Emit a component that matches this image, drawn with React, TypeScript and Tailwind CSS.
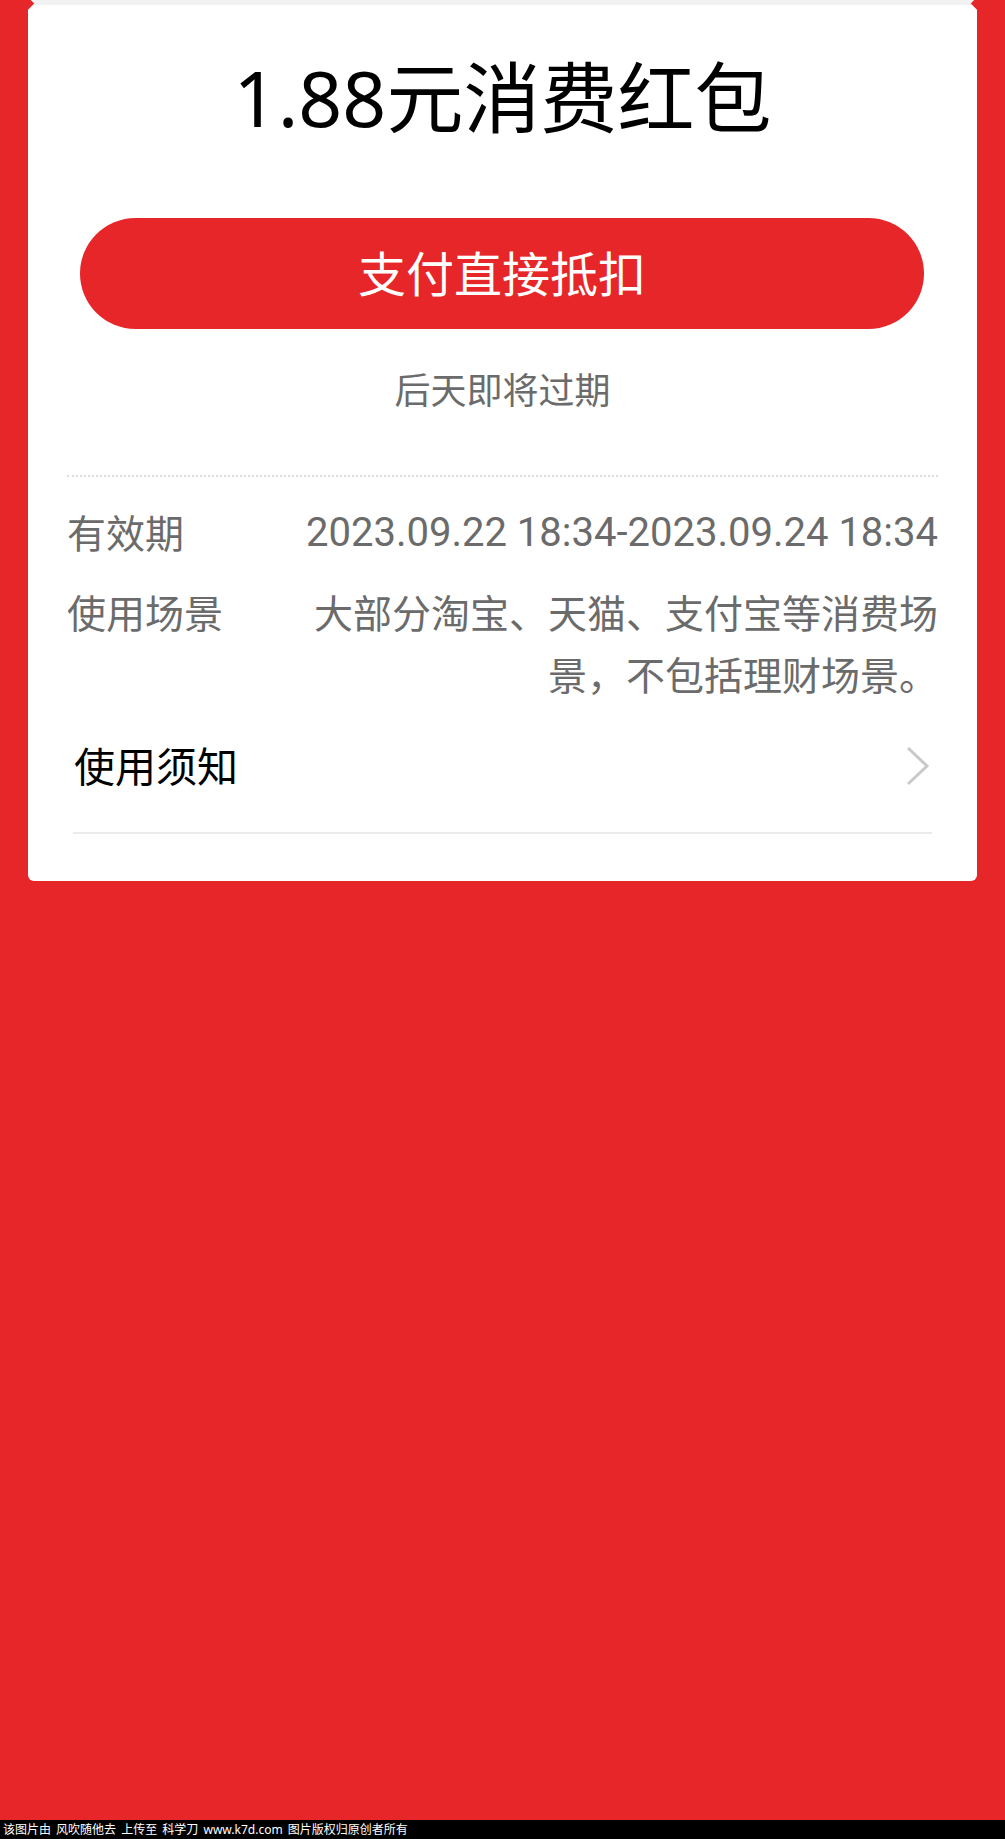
import React from "react";

const ChevronRight = () => (
  <svg width="24" height="40" viewBox="0 0 24 40" fill="none">
    <path d="M2 2 L21 20 L2 38" stroke="#c9c9c9" strokeWidth="3" strokeLinejoin="miter" />
  </svg>
);

const App = () => {
  return (
    <div className="h-[1839px] w-full bg-[#e62629] flex flex-col font-['Noto_Sans','Noto_Sans_CJK_SC',sans-serif]">
      <div className="relative mx-[28px] bg-white rounded-b-[6px] pb-[47px]">
        <div className="h-[5px] bg-[#f2f2f2]" />
        <div className="absolute left-[-7px] top-[-2px] w-[11px] h-[11px] rotate-45 bg-[#e62629]" />
        <div className="absolute right-[-7px] top-[-2px] w-[11px] h-[11px] rotate-45 bg-[#e62629]" />

        <h1 className="mt-[54px] text-center text-[77px] leading-none text-black font-normal">1.88元消费红包</h1>

        <button className="mt-[82px] ml-[52px] mr-[53px] w-[844px] h-[111px] rounded-full bg-[#e62629] text-white text-[48px] leading-none flex items-center justify-center">
          支付直接抵扣
        </button>

        <p className="mt-[44px] text-center text-[36px] leading-none text-[#6b6b6b]">后天即将过期</p>

        <div className="mt-[66px] mx-[39px] border-t-2 border-dotted border-[#dcdcdc]" />

        <div className="px-[39px] text-[39px] leading-[62px] text-[#6b6b6b]">
          <div className="mt-[25px] flex justify-between">
            <span>有效期</span>
            <span className="font-['Roboto',sans-serif] text-[40px]">2023.09.22 18:34-2023.09.24 18:34</span>
          </div>
          <div className="mt-[18px] flex justify-between">
            <span className="shrink-0">使用场景</span>
            <span className="w-[636px] text-right">大部分淘宝、天猫、支付宝等消费场景，不包括理财场景。</span>
          </div>
        </div>

        <div className="mt-[20px] h-[80px] pl-[46px] pr-[47px] flex items-center justify-between">
          <span className="text-[41px] leading-none text-black">使用须知</span>
          <ChevronRight />
        </div>

        <div className="mt-[26px] mx-[45px] h-[2px] bg-[#ebebeb]" />
      </div>

      <div className="flex-1" />

      <div className="h-[19px] bg-black text-white text-[12px] leading-[19px] pl-[3px] whitespace-nowrap overflow-hidden [word-spacing:2px]">
        该图片由 风吹随他去 上传至 科学刀 www.k7d.com 图片版权归原创者所有
      </div>
    </div>
  );
};

export default App;
